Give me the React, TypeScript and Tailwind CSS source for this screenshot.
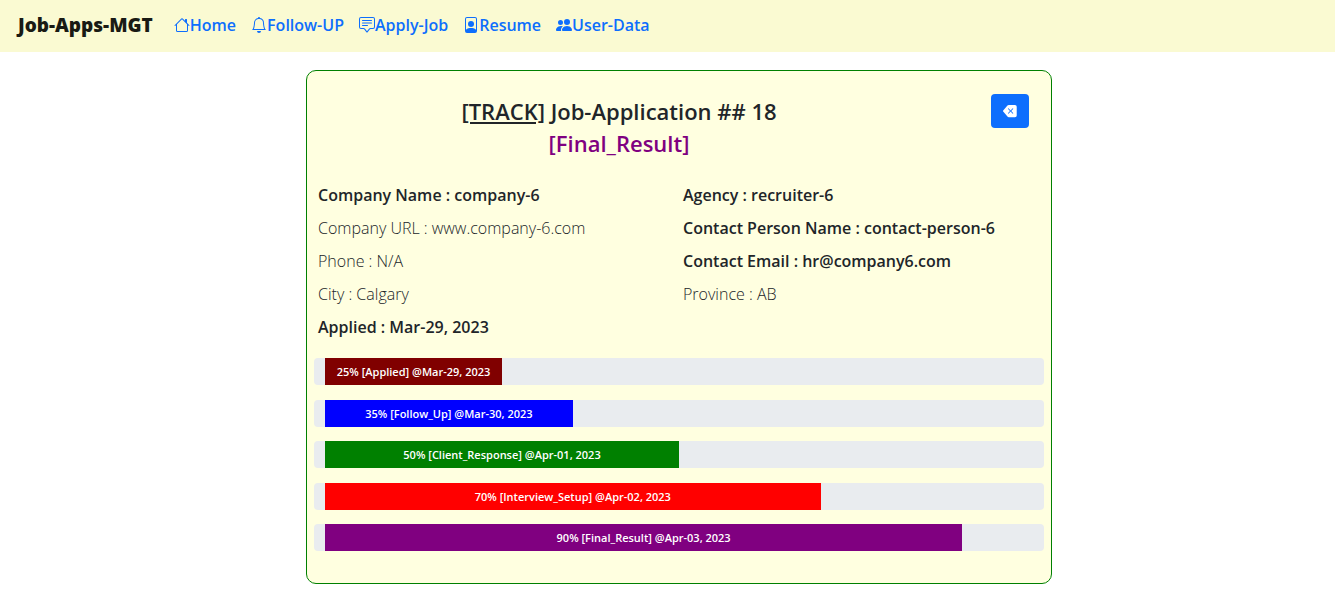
import { BsHouse, BsBell, BsChatSquareText, BsFilePerson, BsPeopleFill, BsBackspaceFill } from "react-icons/bs";

const links = [
  { label: "Home", icon: BsHouse },
  { label: "Follow-UP", icon: BsBell },
  { label: "Apply-Job", icon: BsChatSquareText },
  { label: "Resume", icon: BsFilePerson },
  { label: "User-Data", icon: BsPeopleFill },
];

const company = [
  { text: "Company Name : company-6", strong: true },
  { text: "Company URL : www.company-6.com", strong: false },
  { text: "Phone : N/A", strong: false },
  { text: "City : Calgary", strong: false },
  { text: "Applied : Mar-29, 2023", strong: true },
];

const contact = [
  { text: "Agency : recruiter-6", strong: true },
  { text: "Contact Person Name : contact-person-6", strong: true },
  { text: "Contact Email : hr@company6.com", strong: true },
  { text: "Province : AB", strong: false },
];

const steps = [
  { percent: 25, name: "Applied", date: "Mar-29, 2023", color: "bg-[#800000]" },
  { percent: 35, name: "Follow_Up", date: "Mar-30, 2023", color: "bg-[#0000ff]" },
  { percent: 50, name: "Client_Response", date: "Apr-01, 2023", color: "bg-[#008000]" },
  { percent: 70, name: "Interview_Setup", date: "Apr-02, 2023", color: "bg-[#ff0000]" },
  { percent: 90, name: "Final_Result", date: "Apr-03, 2023", color: "bg-[#800080]" },
];

function Details({ items }: { items: { text: string; strong: boolean }[] }) {
  return (
    <ul className="flex-1 pl-1 text-[16px] leading-[33px]">
      {items.map((item) => (
        <li key={item.text} className={item.strong ? "font-semibold" : "font-light"}>
          {item.text}
        </li>
      ))}
    </ul>
  );
}

export default function App() {
  return (
    <div className="min-h-screen bg-white font-['Open_Sans','Noto_Sans',sans-serif] text-[#212529]">
      <nav className="flex min-h-[52px] flex-wrap items-center bg-[#fafad2] px-[18px] pb-0.5">
        <a href="#" className="mr-[21px] text-[19px] leading-7 font-extrabold text-[#191a14]">
          Job-Apps-MGT
        </a>
        <ul className="flex flex-wrap gap-[15px] text-[16px] font-semibold text-[#0d6efd]">
          {links.map(({ label, icon: Icon }) => (
            <li key={label}>
              <a href="#" className="flex items-center">
                <Icon size={16} aria-hidden="true" />
                {label}
              </a>
            </li>
          ))}
        </ul>
      </nav>

      <main className="pt-[18px] pb-[15px] pl-[23px]">
        <section className="mx-auto max-w-[746px] rounded-[10px] border border-[#008000] bg-[#ffffe0] px-[7px] pt-[23px] pb-8">
          <header className="flex">
            <h1 className="flex-1 pt-px text-center text-[22px] leading-8 font-semibold">
              <span className="underline">[TRACK]</span> Job-Application ## 18
              <br />
              <span className="text-[#800080]">[Final_Result]</span>
            </h1>
            <div className="w-[120px] pr-[15px] text-right">
              <button
                type="button"
                aria-label="Back"
                className="inline-flex h-[34px] w-[38px] items-center justify-center rounded bg-[#0d6efd] text-white"
              >
                <BsBackspaceFill size={14} aria-hidden="true" />
              </button>
            </div>
          </header>

          <div className="mt-5 flex">
            <Details items={company} />
            <Details items={contact} />
          </div>

          <ul className="mt-[14px] grid min-h-[193px] content-between">
            {steps.map((step) => (
              <li key={step.name} className="rounded bg-[#e9ecef] px-[11px]">
                <div
                  className={`${step.color} text-center text-[11px] leading-[27px] font-semibold whitespace-nowrap text-white`}
                  style={{ width: `${step.percent}%` }}
                >
                  {step.percent}% [{step.name}] @{step.date}
                </div>
              </li>
            ))}
          </ul>
        </section>
      </main>
    </div>
  );
}
